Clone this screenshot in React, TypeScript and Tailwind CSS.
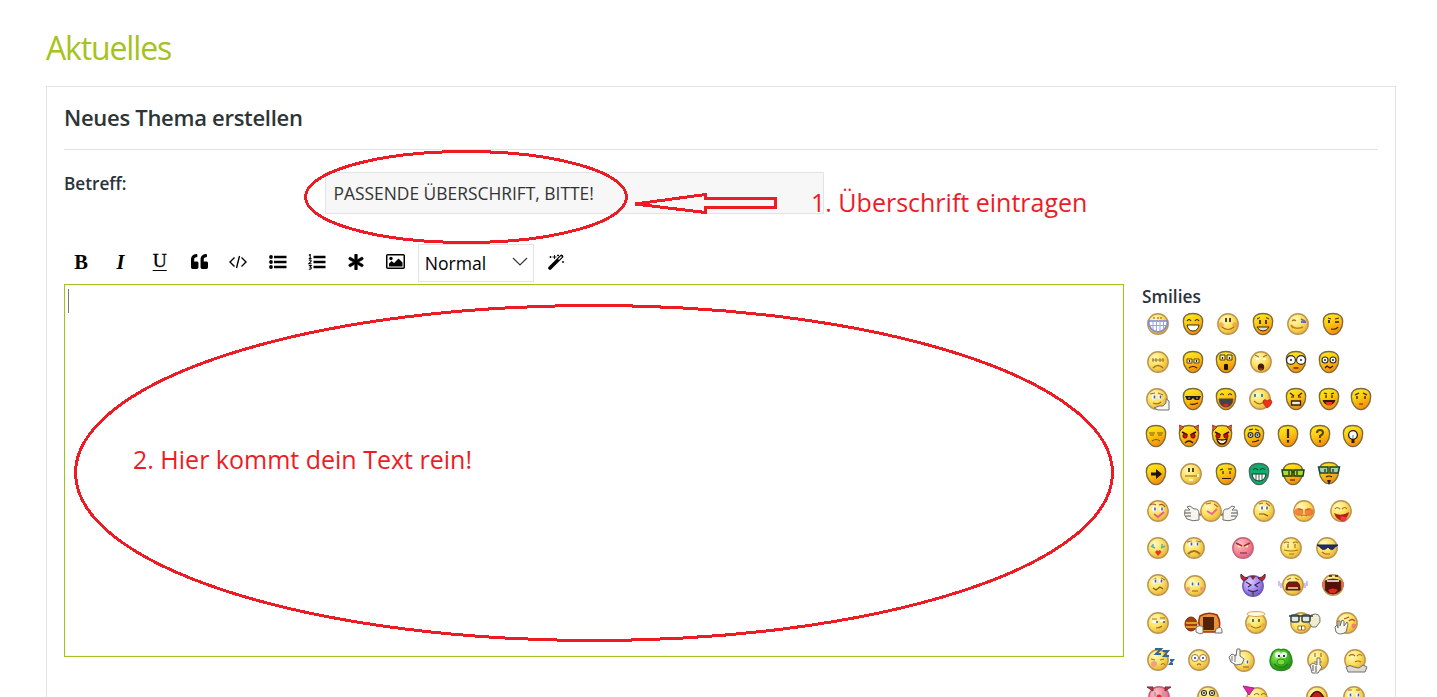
import type { ReactNode } from 'react';
import { FaAsterisk, FaQuoteLeft } from 'react-icons/fa';

type Shape = 'drop' | 'round' | 'green' | 'pink' | 'purple' | 'frog' | 'none';

interface Smiley {
  name: string;
  x: number;
  dy?: number;
  shape: Shape;
  art: ReactNode;
  under?: ReactNode;
}

const ink = { fill: 'none', stroke: '#2b1a05', strokeWidth: 1.2 };
const soft = { fill: 'none', stroke: '#a8701f', strokeWidth: 1.2 };
const hand = { fill: '#f6f6ee', stroke: '#707070', strokeWidth: 1 };

const DROP = 'M0 -10.5C6 -10.5 9.700 -8 9.700 -2.500C9.700 4.500 5.300 10.700 0 10.700C-5.300 10.700 -9.700 4.500 -9.700 -2.500C-9.700 -8 -6 -10.5 0 -10.5Z';

const fills: Record<Shape, [string, string]> = {
  drop: ['url(#drop)', '#7d6a3a'],
  round: ['url(#round)', '#bd9350'],
  green: ['#0fae70', '#47685b'],
  pink: ['url(#pink)', '#c2627a'],
  purple: ['url(#purple)', '#6e58b8'],
  frog: ['url(#frog)', '#2d8a1c'],
  none: ['none', 'none'],
};

function Face({ shape }: { shape: Shape }) {
  const [fill, stroke] = fills[shape];
  if (shape === 'none') return null;
  if (shape === 'drop' || shape === 'green') {
    return <path d={DROP} fill={fill} stroke={stroke} strokeWidth="1.3" />;
  }
  if (shape === 'frog') {
    return <path d="M-8 -8Q-4 -12 0 -10Q4 -12 8 -8Q14 2 8 8Q0 13 -8 8Q-14 2 -8 -8Z" fill={fill} stroke={stroke} strokeWidth="1.5" />;
  }
  return <circle r="10.2" fill={fill} stroke={stroke} strokeWidth="1.4" />;
}

// small building blocks shared by most faces
const Eyes = ({ y = -4, d = 3 }: { y?: number; d?: number }) => (
  <path d={`M${-d} ${y - 2}v4M${d} ${y - 2}v4`} fill="none" stroke="#2b1a05" strokeWidth="1.6" />
);
const BlueEyes = ({ y = -3, d = 3.5 }: { y?: number; d?: number }) => (
  <g>
    <ellipse cx={-d} cy={y} rx="2.200" ry="2.600" fill="#fff" />
    <ellipse cx={d} cy={y} rx="2.200" ry="2.600" fill="#fff" />
    <path d={`M${-d + 0.5} ${y - 1.5}v3M${d + 0.5} ${y - 1.5}v3`} stroke="#3a5ba8" strokeWidth="1.6" />
  </g>
);
const GogglEyes = ({ y = -3, d = 4, r = 3 }: { y?: number; d?: number; r?: number }) => (
  <g fill="#fff" stroke="#2a2a2a" strokeWidth="1.1">
    <circle cx={-d} cy={y} r={r} />
    <circle cx={d} cy={y} r={r} />
    <circle cx={-d} cy={y} r=".5" />
    <circle cx={d} cy={y} r=".5" />
  </g>
);
const Devil = ({ mouth }: { mouth: ReactNode }) => (
  <g>
    <path d="M-9 -5L-9.500 -11L-5 -9ZM9 -5L9.500 -11L5 -9Z" fill="#e65a24" stroke="#6b3a20" strokeWidth=".8" />
    <path d="M-7 -4L-1.500 -1M7 -4L1.500 -1" stroke="#3a0a00" strokeWidth="1.6" />
    <circle cx="-4" cy="0" r="2.200" fill="#d80d0d" stroke="#4b0000" strokeWidth=".7" />
    <circle cx="4" cy="0" r="2.200" fill="#d80d0d" stroke="#4b0000" strokeWidth=".7" />
    {mouth}
  </g>
);

const smileyRows: Smiley[][] = [
  [
    { name: 'biggrin', x: 1158, shape: 'round', art: <g><path d="M-4 -7v2M0 -7v2M3 -7v2" {...soft} /><path d="M-9.500 -3H9.500Q9 7 0 8Q-9 7 -9.500 -3Z" fill="#fff" stroke="#7f84dc" strokeWidth="1.6" /><path d="M-5 -3V6M-1.500 -3V8M2 -3V8M5.500 -3V6M-9 1.500H9" stroke="#8f9af4" strokeWidth=".9" /></g> },
    { name: 'lol', x: 1193, shape: 'drop', art: <g><path d="M-6 -3Q-4 -6 -2 -3M2 -3Q4 -6 6 -3" {...ink} /><path d="M-6 1H6Q5 7 0 7Q-5 7 -6 1Z" fill="#fff" stroke="#3a2a10" /></g> },
    { name: 'smile', x: 1228, shape: 'round', art: <g><circle cx="-7" cy="1" r="2.700" fill="#f5983c" opacity=".7" /><circle cx="7" cy="1" r="2.700" fill="#f5983c" opacity=".7" /><Eyes d={2} /><path d="M-6 3Q0 8 6 3" {...soft} /></g> },
    { name: 'happy', x: 1263, shape: 'drop', art: <g><Eyes y={-2} /><path d="M-6 -5L-3 -6.500M3 -6.500L6 -5" {...ink} strokeWidth={0.9} /><path d="M-6 3H6Q4 7 0 7Q-4 7 -6 3Z" fill="#ddd" stroke="#3a2a10" /></g> },
    { name: 'wink', x: 1297.5, shape: 'round', art: <g><path d="M-6 -3Q-4 -5 -2 -3" {...soft} /><path d="M3 -5L8 -2M3 -2H8" stroke="#6c6cba" strokeWidth="1.8" /><path d="M-6 2Q-3 6 5 3M-7 1L-5 4" {...soft} stroke="#d37a12" strokeWidth={1.6} /></g> },
    { name: 'smirk', x: 1332.5, shape: 'drop', art: <g><path d="M-5 -6L-2 -5M2 -5L6 -6" {...ink} strokeWidth={0.9} /><path d="M-4 -4v3M2 -2H6" {...ink} strokeWidth={1.7} /><path d="M-2 5Q3 6 5 3" {...ink} /></g> },
  ],
  [
    { name: 'sad', x: 1158, shape: 'round', art: <g><path d="M-5 -4v4M-2 -4v4M2 -4v4M5 -4v4M-6 -2H6" {...soft} strokeWidth={1} /><path d="M-5 6Q0 1 5 6" {...soft} strokeWidth={1.6} /></g> },
    { name: 'frown', x: 1193, shape: 'drop', art: <g><path d="M-6 1V-3H-1V1ZM1 1V-3H6V1Z" fill="#f8efc8" stroke="#5b4712" /><path d="M-3.500 -2v2M3.500 -2v2" {...ink} /><path d="M-4 6Q0 3 4 6" {...ink} /></g> },
    { name: 'gasp', x: 1226, shape: 'drop', art: <g><path d="M-6 -2V-7H-1V-2ZM1 -2V-7H6V-2Z" fill="#f8efc8" stroke="#49380e" /><path d="M-3.500 -5v2M3.500 -5v2" {...ink} /><rect x="-2" y="2" width="4" height="6" rx="1" fill="#1d1206" /></g> },
    { name: 'shock', x: 1261, shape: 'round', art: <g><path d="M-6 -7L-2 -5M6 -7L2 -5" {...soft} /><path d="M-5 -3h3M2 -3h3" stroke="#fff" strokeWidth="2" /><ellipse cx="0" cy="5" rx="3.200" ry="3.500" fill="#4c160a" /><path d="M-1.500 7h3" stroke="#d94b2f" /></g> },
    { name: 'eek', x: 1295.5, shape: 'drop', art: <g><GogglEyes d={5} r={4.4} y={-2} /><path d="M-2.500 6H2.500" {...ink} /></g> },
    { name: 'confused', x: 1328.5, shape: 'drop', art: <g><GogglEyes d={4} y={-2} /><path d="M-4 6L-2 4L1 6L4 4" {...ink} /></g> },
  ],
  [
    { name: 'think', x: 1157, shape: 'round', art: <g><path d="M-7 -5L-2 -6M1 -6L6 -4" {...soft} /><BlueEyes y={-2} d={3} /><path d="M-4 4Q1 6 4 3" {...soft} /><path d="M-3 9L2 7L6 7L9 4V0L12 2V11H1Z" {...hand} /></g> },
    { name: 'cool', x: 1193, shape: 'drop', art: <g><path d="M-8 -3H8L6 1H2L0 -1L-2 1H-6Z" fill="#221b14" /><path d="M-3 5Q1 6 5 4" {...ink} /><path d="M-5 -1h2M3 -1h2" stroke="#ddd" strokeWidth=".8" /></g> },
    { name: 'laugh', x: 1226, shape: 'drop', art: <g><path d="M-6 -4Q-4 -7 -2 -4M2 -4Q4 -7 6 -4" {...ink} strokeWidth={1} /><path d="M-7 0H7Q6 8 0 8Q-6 8 -7 0Z" fill="#4a4242" stroke="#544" /><path d="M-3 6Q0 3 3 6L0 8Z" fill="#e32626" /></g> },
    { name: 'kiss', x: 1260, shape: 'round', art: <g><path d="M-5 -5v3M2 -5v3" stroke="#3d8c91" strokeWidth="2" /><path d="M-6 2Q-1 7 4 3" {...soft} /><path d="M3 2Q5 -1 7 2Q11 -1 12 3Q11 7 7 9Q3 5 3 2Z" fill="#f0311c" stroke="#a51c10" strokeWidth=".7" /></g> },
    { name: 'mad', x: 1295.5, shape: 'drop', art: <g><path d="M-6 -6L-2 -3M6 -6L2 -3M-5 -2h3M2 -2h3" {...ink} /><path d="M-4.500 6V2H4.500V6Z" fill="#f7e8d0" stroke="#31210c" strokeWidth="1.3" /></g> },
    { name: 'razz', x: 1328.5, shape: 'drop', art: <g><path d="M-5 -6L-2 -5M5 -6L2 -5M-3 -4v3M3 -4v3" {...ink} /><path d="M-6.500 1H6.500Q5 6 0 6Q-5 6 -6.500 1Z" fill="#3b1707" /><path d="M-3.500 3H3.500L2 6.500H-2Z" fill="#f32e22" /></g> },
    { name: 'worried', x: 1361, shape: 'drop', art: <g><path d="M-6 -4L-2 -6M6 -4L2 -6M-4 -3v3M4 -3v3" {...ink} strokeWidth={1.3} /><path d="M-2 5H2" {...soft} stroke="#6f4310" /></g> },
  ],
  [
    { name: 'neutral', x: 1156, shape: 'drop', art: <g><path d="M-7 -3H-1M1 -3H7M-6 -1H-2M2 -1H6M-4 5Q0 2 4 5" {...soft} stroke="#785b16" /></g> },
    { name: 'evil', x: 1189, shape: 'drop', art: <Devil mouth={<path d="M-4 7Q0 3 4 7" {...ink} />} /> },
    { name: 'twisted', x: 1222, shape: 'drop', art: <Devil mouth={<path d="M-5 3Q0 5 5 3Q4 8 0 8Q-4 8 -5 3Z" fill="#fff3e0" stroke="#2b1405" strokeWidth="1.3" />} /> },
    { name: 'rolleyes', x: 1254, shape: 'drop', art: <g><path d="M-5 -6L-1 -7M1 -7L5 -5" {...ink} strokeWidth={1} /><GogglEyes y={-1} d={3.5} r={2.4} /><path d="M-2 6Q2 6 5 4" {...ink} /></g> },
    { name: 'exclaim', x: 1287.5, shape: 'drop', art: <g><path d="M0 -7V2M0 4v2.500" fill="none" stroke="#332407" strokeWidth="2.200" /></g> },
    { name: 'question', x: 1320, shape: 'drop', art: <g><path d="M-3 -3Q-3 -6 0 -6Q3 -6 3 -3.500Q3 -1.500 0 0V2M0 4v2.500" fill="none" stroke="#5b430d" strokeWidth="2" /></g> },
    { name: 'idea', x: 1353, shape: 'drop', art: <g><circle cy="-1" r="4.400" fill="#fff" stroke="#221a0a" strokeWidth="1.3" /><path d="M-1.500 3H1.500V7H-1.500Z" fill="#221a0a" /><path d="M0 -1V3" stroke="#777" /></g> },
  ],
  [
    { name: 'arrow', x: 1156, shape: 'drop', art: <path d="M-5 -1.500H0V-5L6 0L0 5V1.500H-5Z" fill="#1a1205" /> },
    { name: 'plain', x: 1191, shape: 'round', art: <g><Eyes d={2} /><path d="M-6 2H6" {...soft} /><path d="M-2 6H2M7 0v3" stroke="#fff" strokeWidth="1.500" /></g> },
    { name: 'doubt', x: 1226, shape: 'drop', art: <g><path d="M-6 -4L-3 -5M-3 -3v3M4 -3v3M2 -5L6 -5M-4 4.500H5" {...ink} /></g> },
    { name: 'mrgreen', x: 1259, shape: 'green', art: <g><path d="M-6 -4Q-4 -7 -1 -4M1 -4Q4 -7 6 -4" {...ink} stroke="#06452c" /><path d="M-7 0H7Q6 7 0 7Q-6 7 -7 0Z" fill="#fff" stroke="#123828" /><path d="M-3 0V7M0 0V7M3 0V7" stroke="#123828" strokeWidth=".8" /></g> },
    { name: 'geek', x: 1292.5, shape: 'drop', art: <g><path d="M-11 -4H-1V2H-10ZM1 -4H11L10 2H1Z" fill="#a6dd35" stroke="#1d3b12" strokeWidth="1.500" /><path d="M-4 -3v4M4 -3v4M-1 -2H1M-3 6H2" {...ink} /></g> },
    { name: 'ugeek', x: 1328.5, dy: -1, shape: 'drop', art: <g><path d="M-10.5 -6H-1V0H-9ZM1 -6H10.5L9 0H1Z" fill="#9fd3b0" stroke="#1d4534" strokeWidth="1.500" /><path d="M-4 -4v3M4 -4v3M-3 4Q0 2 3 4" {...ink} /><path d="M-2 7H2L0 12Z" fill="#31271b" /></g> },
  ],
  [
    { name: 'love', x: 1158, shape: 'round', art: <g><path d="M-8 -6Q-5 -8 -2 -6M1 -6Q5 -8 7 -4" {...soft} stroke="#b0521c" /><BlueEyes y={-2} /><path d="M-4 3L0 6L6 1" fill="none" stroke="#ec5a86" strokeWidth="2" /></g> },
    { name: 'thumbs', x: 1211, shape: 'round', under: <g><path d="M-16 2L-10 4M16 2L10 4" stroke="#a46c2f" strokeWidth="2" /><path d="M-26 -1H-21L-24 -4L-21 -5L-17 -2Q-12 -3 -12 3V9Q-18 11 -24 8Q-28 4 -26 -1ZM26 -1H21L24 -4L21 -5L17 -2Q12 -3 12 3V9Q18 11 24 8Q28 4 26 -1Z" {...hand} /><path d="M-26 2H-20M-25 5H-20M26 2H20M25 5H20" stroke="#555" /></g>, art: <g><path d="M-5 -7L0 -8M3 -7L7 -4" {...soft} stroke="#c36b22" /><path d="M-4 0L1 3L6 -2" fill="none" stroke="#ec6487" strokeWidth="1.8" /></g> },
    { name: 'hmm', x: 1264, shape: 'round', art: <g><path d="M-5 -7L-1 -8M2 -8L6 -5" {...soft} /><BlueEyes y={-3} d={2.5} /><path d="M-5 3L0 3L4 5" {...soft} stroke="#8b4711" /></g> },
    { name: 'blush', x: 1304, shape: 'round', art: <g><ellipse cx="-5" cy="1" rx="4.500" ry="4" fill="#ee5a2d" opacity=".7" /><ellipse cx="5" cy="1" rx="4.500" ry="4" fill="#ee5a2d" opacity=".7" /><path d="M-6 -2L-1 -1M1 -1L6 -2M-3 5Q0 3 3 5" {...soft} /></g> },
    { name: 'tongue', x: 1341, shape: 'round', art: <g><path d="M-6 -2Q-4 -5 -1 -2M1 -2Q4 -5 6 -2" {...soft} /><path d="M-7 2Q0 6 8 1Q7 6 4 8Q3 13 -1 9Q-5 8 -7 2Z" fill="#b52017" /><path d="M-1 6Q4 4 6 8Q4 13 0 9Z" fill="#ed3b48" /></g> },
  ],
  [
    { name: 'kisslips', x: 1158, shape: 'round', art: <g><path d="M-5 -4v3M4 -4v3M-7 -2l4 2M7 -2l-4 2" stroke="#62aaa3" strokeWidth="1.400" /><path d="M-3 4L-1 2L0 3L2 2L3.500 4L0 8Z" fill="#ec3321" /></g> },
    { name: 'down', x: 1194, shape: 'round', art: <g><path d="M-7 -6L-2 -7M2 -7L7 -6" {...soft} /><BlueEyes y={-4} d={3} /><path d="M-6 6Q0 0 6 6" {...soft} strokeWidth={1.8} /></g> },
    { name: 'angry', x: 1243, shape: 'pink', art: <g><path d="M-5 -2h3M2 -2h3" stroke="#fff09a" strokeWidth="2.4" /><path d="M-7 -5L-1 -2M7 -5L1 -2" stroke="#9e3226" strokeWidth="1.500" /><path d="M-3 5H4" stroke="#b05070" strokeWidth="2" /></g> },
    { name: 'grin', x: 1290.5, shape: 'round', art: <g><path d="M-7 -5Q-4 -7 -2 -5M2 -5Q5 -7 7 -5M-3 -4v4M4 -4v4M-7 2Q0 4 7 2M-2 6H3" {...soft} /></g> },
    { name: 'shades', x: 1327, shape: 'round', art: <g><path d="M-10 -3H11L8 -1Q5 4 1 -1Q-4 4 -7 -1Z" fill="#222c6e" stroke="#14204d" /><path d="M-5 4L-2 6H3" {...soft} stroke="#c05823" /></g> },
  ],
  [
    { name: 'uneasy', x: 1158, shape: 'round', art: <g><path d="M-5 -5L-2 -7M3 -7L7 -5" {...soft} /><BlueEyes y={-4} d={3} /><path d="M-5 3L-2 5L2 2L5 4" {...soft} stroke="#865310" /></g> },
    { name: 'ashamed', x: 1195, dy: 1, shape: 'round', art: <g><circle cx="-7" cy="3" r="2" fill="#f19a78" /><circle cx="7" cy="3" r="2" fill="#f19a78" /><BlueEyes y={-2} d={3} /><path d="M-3 5H3" {...soft} /></g> },
    { name: 'demon', x: 1253, dy: 1, shape: 'purple', art: <g><path d="M-9 -5Q-13 -7 -12 -12Q-9 -8 -5 -8ZM9 -5Q13 -7 12 -12Q9 -8 5 -8Z" fill="#c22334" stroke="#5a2431" /><path d="M-3 -10L0 -6L3 -10Z" fill="#7a2e32" /><path d="M-7 -4L-2 -1L-5 1M7 -4L2 -1L5 1M-5 4Q0 7 5 4" fill="none" stroke="#33294f" strokeWidth="1.200" /><path d="M-1.500 6H1.500L0 11Z" fill="#555" /></g> },
    { name: 'scream', x: 1293, shape: 'round', art: <g><path d="M-14 -4v5M-12 -2v5M14 -4v5M12 -2v5" stroke="#c6a7f2" strokeWidth="1.500" /><path d="M-6 -5L-2 -7M6 -5L2 -7" {...soft} /><path d="M-7 5Q-7 -2 -4 -3H4Q7 -2 7 5Z" fill="#7b190c" stroke="#4c210c" /><path d="M-5 3H5" stroke="#e6dfc1" strokeWidth="1.500" /></g> },
    { name: 'yell', x: 1333, shape: 'round', art: <g><path d="M-4 -9h3M2 -9h3" stroke="#2c180a" strokeWidth="1.500" /><path d="M-8 -4Q0 -8 8 -4V5Q4 9 0 9Q-5 9 -8 5Z" fill="#521008" stroke="#602f12" /><path d="M-6 -4H6" stroke="#fff" strokeWidth="1.500" /><path d="M-5 5Q0 2 5 5L2 8H-3Z" fill="#df2922" /><path d="M-10 -3v5M10 -3v5" stroke="#ed6666" strokeWidth="2" /></g> },
  ],
  [
    { name: 'sideways', x: 1158, shape: 'round', art: <g><path d="M-6 -4H-1M2 -5H7" {...soft} /><path d="M-6 -1h5M2 -2h5" stroke="#fff" strokeWidth="2" /><path d="M-1 -2v2M6 -2v2" stroke="#2d5795" strokeWidth="1.500" /><path d="M-2 5Q2 5 4 3" {...soft} /></g> },
    { name: 'boxer', x: 1204, shape: 'none', art: <g><ellipse cx="-13" cy="1" rx="6" ry="7" fill="#a63c13" stroke="#743112" /><path d="M-18 0H-5M-18 4H-4" stroke="#d8a128" strokeWidth="2" /><path d="M-4 -7Q4 -12 13 -8Q18 0 14 9H-2Q-7 0 -4 -7Z" fill="#e39539" stroke="#a92b18" strokeWidth="1.500" /><rect x="-1" y="-6" width="11" height="13" fill="#532207" /><path d="M-8 5Q-5 1 -1 4V10Q-4 12 -8 9ZM12 6Q18 2 18 8V10H11Z" {...hand} /></g> },
    { name: 'angel', x: 1256, shape: 'round', art: <g><ellipse cy="-9" rx="9" ry="2.500" fill="#fff9dc" stroke="#d6a455" /><path d="M-3 -4v3M3 -4v3" stroke="#437c69" strokeWidth="2" /><path d="M-5 3Q0 7 5 3" {...soft} /><circle cx="-7" cy="2" r="2" fill="#f1a03c" opacity=".7" /><circle cx="7" cy="2" r="2" fill="#f1a03c" opacity=".7" /></g> },
    { name: 'nerd', x: 1301, shape: 'round', art: <g><path d="M10 -8Q20 -12 19 -1L15 4H11L8 0Z" {...hand} fill="#f0edcf" /><g fill="#dfe9e4" stroke="#3f494a" strokeWidth="1.600"><rect x="-10" y="-8" width="8" height="7" rx="2" /><rect x="1" y="-8" width="8" height="7" rx="2" /></g><path d="M-12 -7H12" stroke="#343e40" strokeWidth="1.500" /><path d="M-3 3H4V7H-3Z" fill="#fff" stroke="#a5722b" /><path d="M.5 3v4" stroke="#87511b" /></g> },
    { name: 'facepalm', x: 1347, shape: 'round', art: <g><path d="M-3 -4L2 -6M2 -2Q5 -5 8 -2" {...soft} stroke="#c04626" /><circle cx="7" cy="3" r="2.500" fill="#f18065" /><path d="M-12 4L-10 2L-9 5V-2H-7V3L-5 -3L-3 -2V3L0 -1L1 1L-1 9Q-7 13 -11 9Z" {...hand} /></g> },
  ],
  [
    { name: 'sleep', x: 1158, shape: 'round', art: <g><path d="M-7 -1L-3 0M2 0L6 -1M3 5Q5 2 7 5" {...soft} /><circle cx="-4" cy="4" r="3" fill="#f3a281" /><path d="M-3 -11H3L-2 -6H3M5 -9H10L6 -4H11M12 0H15L12 4H15" fill="none" stroke="#2f6799" strokeWidth="2" /></g> },
    { name: 'stare', x: 1199, shape: 'round', art: <g><g fill="#fff" stroke="#9b7b55"><circle cx="-4" cy="-2" r="3.500" /><circle cx="4" cy="-2" r="3.500" /></g><path d="M-4 -3v2M4 -3v2" stroke="#5565a5" strokeWidth="2" /><path d="M-2 5Q0 3 2 5" {...soft} /></g> },
    { name: 'pointing', x: 1244, dy: 1, shape: 'round', art: <g><BlueEyes y={1} d={3} /><path d="M-1 6H5" {...soft} /><path d="M-15 -4L-12 -7L-8 -5L-7 -12H-4V-5L0 -2L-2 3L-8 4L-13 1Z" {...hand} /><path d="M-12 -5V0M-9 -5V1" stroke="#777" /></g> },
    { name: 'frog', x: 1281, shape: 'frog', art: <g><circle cx="-3" cy="-5" r="3" fill="#eef8ef" /><circle cx="3" cy="-5" r="3" fill="#eef8ef" /><path d="M-2 -5v2M3 -5v2" stroke="#24404c" strokeWidth="2" /><ellipse cy="2" rx="4" ry="3" fill="#79dc38" stroke="#2f961d" /><path d="M-7 4Q0 11 7 4" fill="none" stroke="#24801a" strokeWidth="1.500" /></g> },
    { name: 'hush', x: 1318, shape: 'round', art: <g><path d="M-3 -7v4M3 -7v4M-4 2H4" {...soft} /><path d="M-8 5L-5 3L-1 5V-2H2V5L4 7L0 13H-6Z" {...hand} /><path d="M-5 5V11M-2 6V12" stroke="#555" /></g> },
    { name: 'shrug', x: 1355, shape: 'round', art: <g><path d="M-6 -4Q-3 -7 0 -4M2 -4Q5 -7 7 -4M0 2Q3 0 6 2" {...soft} /><path d="M-9 7Q-5 4 -1 7L4 8L8 5L12 7L10 12H-7Z" {...hand} fill="#ded9d0" /></g> },
  ],
  [
    { name: 'clown', x: 1159, shape: 'pink', art: <g><path d="M-6 -6L-12 -10L-6 -10ZM6 -6L12 -10L6 -10Z" fill="#b43b46" stroke="#7b2b30" /><path d="M-4 -5v4M4 -5v4" stroke="#a0a6b5" strokeWidth="2" /><circle r="2.500" fill="#ee2336" /></g> },
    { name: 'lookup', x: 1208, shape: 'round', art: <g><GogglEyes y={-4} r={2.5} /></g> },
    { name: 'party', x: 1257, dy: 1, shape: 'round', art: <g><path d="M-14 -12L-3 -10L-8 -3Z" fill="#df29a6" stroke="#a52183" /><path d="M-3 -3Q0 -6 2 -3M4 -3Q7 -6 9 -3" {...soft} /></g> },
    { name: 'shout', x: 1317, shape: 'round', art: <g><path d="M-7 1Q0 -12 7 1Z" fill="#c31f19" stroke="#4b120c" strokeWidth="1.500" /></g> },
    { name: 'cry', x: 1354, shape: 'round', art: <g><path d="M-6 -7H-2M2 -7H6" {...soft} /><BlueEyes y={-2} d={4} /></g> },
  ],
];

function SmileyRow({ items }: { items: Smiley[] }) {
  const slot = 28;
  return (
    <div className="flex h-[37.3px] items-center">
      {items.map((s, i) => {
        const prev = i === 0 ? 1142 : items[i - 1].x + slot / 2;
        return (
          <svg
            key={s.name}
            width={slot}
            height={slot}
            viewBox="-14 -14 28 28"
            className="shrink-0 overflow-visible"
            style={{ marginLeft: s.x - slot / 2 - prev }}
            aria-label={s.name}
          >
            <g transform={`translate(0 ${s.dy ?? 0})`}>
              {s.under}
              <Face shape={s.shape} />
              {s.art}
            </g>
          </svg>
        );
      })}
    </div>
  );
}

function Gradients() {
  const stops = [
    ['round', '#fffac0', '#fae05b', '#e5ae35'],
    ['pink', '#ffc1c9', '#f68898', '#dd6279'],
    ['purple', '#e0cdff', '#a68cf4', '#735abd'],
    ['frog', '#a6f066', '#45be27', '#238b19'],
  ];
  return (
    <svg className="absolute size-0">
      <defs>
        <linearGradient id="drop" x1="0" y1="0" x2="0.4" y2="1">
          <stop offset="0" stopColor="#fff21a" />
          <stop offset=".5" stopColor="#fbcb12" />
          <stop offset="1" stopColor="#f68e0b" />
        </linearGradient>
        {stops.map(([id, a, b, c]) => (
          <radialGradient key={id} id={id} cx=".35" cy=".3" r=".75">
            <stop offset="0" stopColor={a} />
            <stop offset=".55" stopColor={b} />
            <stop offset="1" stopColor={c} />
          </radialGradient>
        ))}
      </defs>
    </svg>
  );
}

const CodeIcon = () => (
  <svg width="18" height="14" viewBox="0 0 18 14" fill="none" stroke="currentColor" strokeWidth="1.4">
    <path d="M5.500 2.500L1 7l4.500 4.500M12.500 2.500L17 7l-4.500 4.500M10.500 1L7.500 13" />
  </svg>
);

const BulletListIcon = () => (
  <svg width="18" height="14" viewBox="0 0 18 14" fill="currentColor">
    <circle cx="2" cy="2" r="1.900" />
    <circle cx="2" cy="7" r="1.900" />
    <circle cx="2" cy="12" r="1.900" />
    <path d="M5 .8h12.500v2.400H5zM5 5.800h12.500v2.400H5zM5 10.800h12.500v2.400H5z" />
  </svg>
);

const NumberListIcon = () => (
  <svg width="18" height="16" viewBox="0 0 18 16" fill="currentColor">
    <path d="M5.500 1.800h12v2.400h-12zM5.500 6.800h12v2.400h-12zM5.500 11.800h12v2.400h-12z" />
    <path d="M.8 1.200L2.200.5V4.500M.8 4.500H3.600M.8 6.200Q3.200 5.200 3.200 7L.8 9.700H3.600M.8 11.500H3.200L2 13Q3.500 13 3.200 14.500Q2.500 15.800.8 15" fill="none" stroke="currentColor" strokeWidth="1.100" />
  </svg>
);

const PictureIcon = () => (
  <svg width="19" height="15" viewBox="0 0 19 15">
    <rect x=".75" y=".75" width="17.500" height="13.500" rx="1" fill="none" stroke="currentColor" strokeWidth="1.500" />
    <circle cx="5" cy="4.500" r="1.700" fill="currentColor" />
    <path d="M3 12.500V9.500L5.500 7L8 9L12.500 4.500L16.500 8.500V12.500Z" fill="currentColor" />
  </svg>
);

const WandIcon = () => (
  <svg width="17" height="16" viewBox="0 0 17 16">
    <path d="M2 14L13.500 2.500" stroke="currentColor" strokeWidth="3.600" strokeLinecap="round" />
    <path d="M10.500 5.500L13.500 2.500" stroke="#fff" strokeWidth="1.300" />
    <path d="M2.500 2v2M1.500 3h2M6.500 1v4M4.500 3h4M10 .5v2M9 1.500h2M15 7v2M14 8h2" stroke="currentColor" strokeWidth=".9" />
  </svg>
);

const toolButton = 'flex h-9 w-[39.3px] shrink-0 items-center justify-center text-black';

function Toolbar() {
  return (
    <div className="flex h-[38px] items-center">
      <div className="-ml-[2.5px] flex items-center pb-0.5 font-['Liberation_Serif',serif] text-[20.5px]">
        <button className={toolButton}><b>B</b></button>
        <button className={toolButton}><b className="italic">I</b></button>
        <button className={toolButton}><span className="pb-0.5 text-[19.5px] underline decoration-1 underline-offset-[3px] [-webkit-text-stroke:0.3px_black]">U</span></button>
      </div>
      <div className="flex items-center pb-[3px]">
        <button className={toolButton}><FaQuoteLeft size={17} /></button>
        <button className={toolButton}><CodeIcon /></button>
        <button className={toolButton}><BulletListIcon /></button>
        <button className={toolButton}><NumberListIcon /></button>
        <button className={toolButton}><FaAsterisk size={16} stroke="black" strokeWidth={18} /></button>
        <button className={toolButton}><PictureIcon /></button>
      </div>
      <div className="ml-[2.5px] flex h-[38px] w-[116px] items-center justify-between border border-[#e3e3e3] pl-[6px] pr-[5px] text-black">
        <span className="pt-px text-[17.6px]">Normal</span>
        <svg width="16" height="9" viewBox="0 0 16 9" fill="none" stroke="#333" strokeWidth="1.1" className="mb-1">
          <path d="M1 1l7 7 7-7" />
        </svg>
      </div>
      <div className="ml-[3px] flex items-center pb-[3px]">
        <button className={toolButton}><WandIcon /></button>
      </div>
    </div>
  );
}

function Annotations() {
  return (
    <div className="pointer-events-none absolute inset-0 text-[25px] leading-8 text-[#ed1c24]">
      <svg width="1437" height="697" fill="none" stroke="#ed1c24" strokeWidth="3" shapeRendering="crispEdges">
        <ellipse cx="466" cy="197" rx="160.5" ry="45.5" />
        <ellipse cx="594" cy="473" rx="518.5" ry="167.5" />
        <path d="M635 204L705.5 194.5V198.5H775.5V207.500H705.5V212.500Z" />
      </svg>
      <span className="absolute left-[811px] top-[186px] whitespace-nowrap">1. Überschrift eintragen</span>
      <span className="absolute left-[133px] top-[443px] whitespace-nowrap">2. Hier kommt dein Text rein!</span>
    </div>
  );
}

export default function App() {
  return (
    <div className="relative h-[697px] w-[1437px] overflow-hidden bg-white px-[46px] pr-[41px] font-['Open_Sans',sans-serif] text-[#2b323c]">
      <Gradients />
      <h1 className="h-[86px] pt-[26px] text-[32px] leading-[44px] tracking-[-1.15px] text-[#a5c31b]">Aktuelles</h1>
      <main className="h-[640px] border border-[#e3e3e3] px-[17px]">
        <h2 className="h-[63px] border-b border-[#e3e3e3] pt-[15px] text-[22px] font-semibold leading-[30px] tracking-[-0.29px] text-[#2d3436]">
          Neues Thema erstellen
        </h2>
        <div className="flex h-[94px] pt-[22px]">
          <label className="w-[261px] text-[17.2px] font-semibold leading-6">Betreff:</label>
          <input
            className="h-[42px] w-[499px] border border-[#e3e3e3] bg-[#f7f7f7] px-[7.5px] text-[17.4px] text-[#333] outline-none"
            defaultValue="PASSENDE ÜBERSCHRIFT, BITTE!"
          />
        </div>
        <Toolbar />
        <div className="mt-[2px] flex">
          <div className="h-[373px] w-[1060px] shrink-0 border border-[#a1c125] p-[3px] shadow-[inset_0_0_1px_#a1c125]">
            <div className="mt-px h-[24px] w-px bg-[#777]" />
          </div>
          <aside className="ml-[18px]">
            <h3 className="h-[21.7px] text-[17.3px] font-semibold leading-[26px]">Smilies</h3>
            {smileyRows.map((row, i) => (
              <SmileyRow key={i} items={row} />
            ))}
          </aside>
        </div>
      </main>
      <Annotations />
    </div>
  );
}
